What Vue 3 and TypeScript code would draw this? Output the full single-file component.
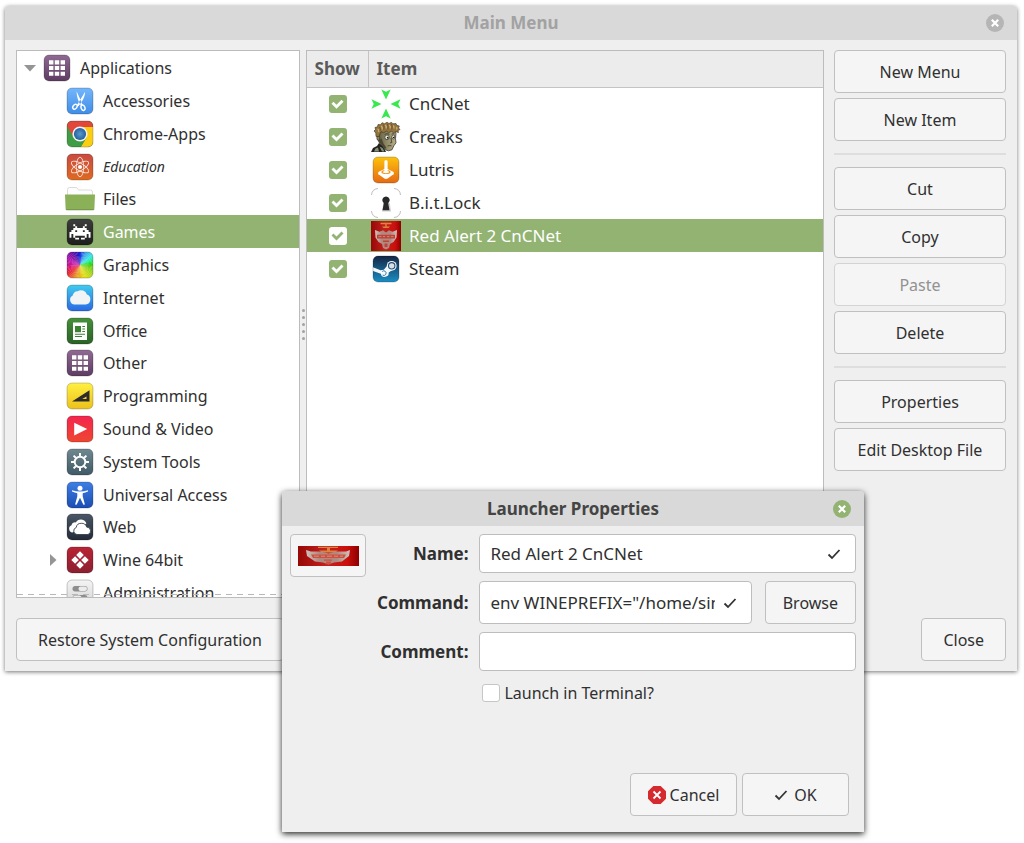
<script setup lang="ts">
import { ref } from 'vue'

interface Category { label: string; icon: string; empty?: boolean; expandable?: boolean }
interface MenuItem { label: string; icon: string; shown: boolean }
interface Action { label: string; disabled?: boolean }

const categories: Category[] = [
  { label: 'Accessories', icon: 'scissors' },
  { label: 'Chrome-Apps', icon: 'chrome' },
  { label: 'Education', icon: 'atom', empty: true },
  { label: 'Files', icon: 'folder' },
  { label: 'Games', icon: 'invader' },
  { label: 'Graphics', icon: 'colors' },
  { label: 'Internet', icon: 'internet' },
  { label: 'Office', icon: 'office' },
  { label: 'Other', icon: 'grid' },
  { label: 'Programming', icon: 'ruler' },
  { label: 'Sound & Video', icon: 'play' },
  { label: 'System Tools', icon: 'gear' },
  { label: 'Universal Access', icon: 'access' },
  { label: 'Web', icon: 'web' },
  { label: 'Wine 64bit', icon: 'wine', expandable: true },
  { label: 'Administration', icon: 'admin' },
]
const selectedCategory = ref('Games')

const items = ref<MenuItem[]>([
  { label: 'CnCNet', icon: 'cncnet', shown: true },
  { label: 'Creaks', icon: 'creaks', shown: true },
  { label: 'Lutris', icon: 'lutris', shown: true },
  { label: 'B.i.t.Lock', icon: 'lock', shown: true },
  { label: 'Red Alert 2 CnCNet', icon: 'redalert', shown: true },
  { label: 'Steam', icon: 'steam', shown: true },
])
const selectedItem = ref('Red Alert 2 CnCNet')

const actionGroups: Action[][] = [
  [{ label: 'New Menu' }, { label: 'New Item' }],
  [{ label: 'Cut' }, { label: 'Copy' }, { label: 'Paste', disabled: true }, { label: 'Delete' }],
  [{ label: 'Properties' }, { label: 'Edit Desktop File' }],
]

const name = ref('Red Alert 2 CnCNet')
const command = ref('env WINEPREFIX="/home/simon/.wine" wine')
const comment = ref('')
const terminal = ref(false)

// Colour wheel stops: clockwise angle from the top, hue, lightness.
const stops = [
  [0, 232, 48], [25, 205, 58], [45, 188, 58], [70, 150, 52], [95, 95, 45], [135, 70, 47],
  [170, 53, 50], [200, 35, 54], [225, 5, 56], [270, -40, 44], [315, -72, 36], [340, -100, 38], [360, -128, 48],
]
function colourAt(angle: number): string {
  const i = Math.max(1, stops.findIndex(([a]) => angle <= a))
  const [a0, h0, l0] = stops[i - 1]
  const [a1, h1, l1] = stops[i]
  const t = (angle - a0) / (a1 - a0)
  return `hsl(${h0 + (h1 - h0) * t}, 80%, ${l0 + (l1 - l0) * t}%)`
}
const wheel = Array.from({ length: 60 }, (_, i) => {
  const a = i * 6
  const pt = (d: number) => {
    const r = (d * Math.PI) / 180
    return `${15 + 22 * Math.sin(r)},${15 - 22 * Math.cos(r)}`
  }
  return { points: `15,15 ${pt(a)} ${pt(a + 7)}`, fill: colourAt(a + 3) }
})
</script>

<template>
  <svg class="defs" aria-hidden="true">
    <defs>
      <linearGradient id="g-purple" x2="0" y2="1"><stop stop-color="#8f6a92" /><stop offset="1" stop-color="#5e3c62" /></linearGradient>
      <linearGradient id="g-blue" x2="0" y2="1"><stop stop-color="#74b6fb" /><stop offset="1" stop-color="#3f8de8" /></linearGradient>
      <linearGradient id="g-atom" x2="0" y2="1"><stop stop-color="#c94a43" /><stop offset="1" stop-color="#dd6a20" /></linearGradient>
      <linearGradient id="g-net" x2="0" y2="1"><stop stop-color="#3fcbee" /><stop offset="1" stop-color="#2a69e4" /></linearGradient>
      <linearGradient id="g-office" x2="0" y2="1"><stop stop-color="#45903a" /><stop offset="1" stop-color="#2b6227" /></linearGradient>
      <linearGradient id="g-yellow" x2="0" y2="1"><stop stop-color="#fff041" /><stop offset="1" stop-color="#ecc11b" /></linearGradient>
      <linearGradient id="g-red" x2="0" y2="1"><stop stop-color="#f4264f" /><stop offset="1" stop-color="#ee4630" /></linearGradient>
      <linearGradient id="g-slate" x2="0" y2="1"><stop stop-color="#708890" /><stop offset="1" stop-color="#3f5a66" /></linearGradient>
      <linearGradient id="g-access" x2="0" y2="1"><stop stop-color="#3e7fe4" /><stop offset="1" stop-color="#1b4db4" /></linearGradient>
      <linearGradient id="g-web" x2="0" y2="1"><stop stop-color="#4a5766" /><stop offset="1" stop-color="#232b38" /></linearGradient>
      <linearGradient id="g-wine" x2="0" y2="1"><stop stop-color="#b92434" /><stop offset="1" stop-color="#8b2030" /></linearGradient>
      <linearGradient id="g-black" x2="0" y2="1"><stop stop-color="#3d3d3d" /><stop offset="1" stop-color="#1d1d1d" /></linearGradient>
      <linearGradient id="g-grey" x2="0" y2="1"><stop stop-color="#f4f4f4" /><stop offset="1" stop-color="#d4d4d4" /></linearGradient>
      <linearGradient id="g-orange" x2="0" y2="1"><stop stop-color="#fdc20c" /><stop offset="1" stop-color="#e66a12" /></linearGradient>
      <linearGradient id="g-steam" x2="0" y2="1"><stop stop-color="#152543" /><stop offset="1" stop-color="#1b8ec4" /></linearGradient>
      <radialGradient id="g-lens"><stop stop-color="#5b9bd0" /><stop offset="1" stop-color="#255f9b" /></radialGradient>
      <linearGradient id="g-crimson"><stop stop-color="#960807" /><stop offset="0.45" stop-color="#c4201b" /><stop offset="0.8" stop-color="#cb100d" /><stop offset="1" stop-color="#8c0000" /></linearGradient>
      <linearGradient id="g-wing"><stop stop-color="#cfc2bd" /><stop offset="0.3" stop-color="#b08a80" /><stop offset="0.7" stop-color="#b08a80" /><stop offset="1" stop-color="#cfc2bd" /></linearGradient>
      <linearGradient id="g-skin"><stop stop-color="#5e5a40" /><stop offset="0.5" stop-color="#8f8a66" /><stop offset="1" stop-color="#b5ae88" /></linearGradient>
      <clipPath id="tile-clip"><rect x="2" y="2" width="26" height="26" rx="5" /></clipPath>
    </defs>

    <symbol id="i-grid" viewBox="0 0 30 30">
      <rect class="tile" x="2" y="2" width="26" height="26" rx="5" fill="url(#g-purple)" />
      <path fill="#fff" d="M7 7.3h4.4v4.1H7zM12.8 7.3h4.4v4.1h-4.4zM18.6 7.3H23v4.1h-4.4zM7 13h4.4v4.1H7zM12.8 13h4.4v4.1h-4.4zM18.6 13H23v4.1h-4.4zM7 18.7h4.4v4.1H7zM12.8 18.7h4.4v4.1h-4.4zM18.6 18.7H23v4.1h-4.4z" />
    </symbol>
    <symbol id="i-scissors" viewBox="0 0 30 30">
      <rect class="tile" x="2" y="2" width="26" height="26" rx="5" fill="url(#g-blue)" />
      <path fill="#fff" d="M11.6 5.2 17.8 19l-1.7.9C13.4 15.7 11.5 10.5 11.6 5.2zM20.1 5.8 11.9 19.2l1.6 1C17.3 16 20 11 20.1 5.8z" />
      <ellipse cx="10" cy="20.7" rx="1.9" ry="2.7" transform="rotate(38 10 20.7)" fill="none" stroke="#fff" stroke-width="1.4" />
      <ellipse cx="18" cy="21.7" rx="1.9" ry="2.8" transform="rotate(-20 18 21.7)" fill="none" stroke="#fff" stroke-width="1.4" />
    </symbol>
    <symbol id="i-chrome" viewBox="0 0 30 30">
      <g clip-path="url(#tile-clip)">
        <path fill="#3f9d45" d="M2 2h26v26H2z" />
        <path fill="#fcce12" d="M15 8h13v20H16l6-10z" />
        <path fill="#e2473c" d="M2 2h26v6H15l-6.5 10L2 7z" />
      </g>
      <circle cx="15" cy="15" r="7.6" fill="#f3f3f3" />
      <circle cx="15" cy="15" r="6.1" fill="url(#g-lens)" />
      <rect class="tile" x="2" y="2" width="26" height="26" rx="5" fill="none" />
    </symbol>
    <symbol id="i-atom" viewBox="0 0 30 30">
      <rect class="tile" x="2" y="2" width="26" height="26" rx="5" fill="url(#g-atom)" />
      <g fill="none" stroke="#fbe3da" stroke-width="0.9">
        <ellipse cx="15" cy="15" rx="3.7" ry="9.8" />
        <ellipse cx="15" cy="15" rx="3.7" ry="9.8" transform="rotate(60 15 15)" />
        <ellipse cx="15" cy="15" rx="3.7" ry="9.8" transform="rotate(120 15 15)" />
      </g>
      <circle cx="15" cy="15" r="2" fill="#fff" />
    </symbol>
    <symbol id="i-folder" viewBox="0 0 30 30">
      <path fill="#fdfdfd" stroke="#d2d2d2" stroke-width="0.8" d="M2.5 12V5.5a2 2 0 0 1 2-2h7l2 2.5h12a2 2 0 0 1 2 2V12z" />
      <path fill="#8ab158" d="M0 10.5h30l-.6 14a1.5 1.5 0 0 1-1.5 1.5H2.1a1.5 1.5 0 0 1-1.5-1.5z" />
      <path fill="#6f9342" d="M.6 25.2h28.8l-.8 1H1.4z" />
    </symbol>
    <symbol id="i-invader" viewBox="0 0 30 30">
      <rect class="tile" x="2" y="2" width="26" height="26" rx="5" fill="url(#g-black)" />
      <path transform="translate(4.5 7.3) scale(1.91)" fill="#fff" d="M2 0h1v1H2zM8 0h1v1H8zM3 1h1v1.05H3zM7 1h1v1.05H7zM2 2h7v1.05H2zM1 3h2v1.05H1zM4 3h3v1.05H4zM8 3h2v1.05H8zM0 4h11v1.05H0zM0 5h1v1.05H0zM2 5h7v1H2zM10 5h1v1.05h-1zM0 6h1v1H0zM2 6h1v1H2zM8 6h1v1H8zM10 6h1v1h-1zM3 7h2v1H3zM6 7h2v1H6z" />
    </symbol>
    <symbol id="i-colors" viewBox="0 0 30 30">
      <g clip-path="url(#tile-clip)">
        <polygon v-for="(w, i) in wheel" :key="i" :points="w.points" :fill="w.fill" />
      </g>
      <rect class="tile" x="2" y="2" width="26" height="26" rx="5" fill="none" />
    </symbol>
    <symbol id="i-internet" viewBox="0 0 30 30">
      <rect class="tile" x="2" y="2" width="26" height="26" rx="5" fill="url(#g-net)" />
      <path fill="#f1f3f5" d="M9.5 21.5a4.7 4.7 0 0 1-1.8-8.9 4.7 4.7 0 0 1 5-4.3 6 6 0 0 1 9.2 3.3 5.1 5.1 0 0 1-1.2 9.9z" />
    </symbol>
    <symbol id="i-office" viewBox="0 0 30 30">
      <rect class="tile" x="2" y="2" width="26" height="26" rx="5" fill="url(#g-office)" />
      <path fill="#fff" d="M8 6.5h14v17.5H8z" />
      <path fill="#3c8132" d="M10 10h6v6.3h-6zM17.3 10H20v1h-2.7zM17.3 12.5H20v1h-2.7zM17.3 15H20v1h-2.7zM10 17.7h10v1H10zM10 20h7v1h-7z" />
    </symbol>
    <symbol id="i-ruler" viewBox="0 0 30 30">
      <rect class="tile" x="2" y="2" width="26" height="26" rx="5" fill="url(#g-yellow)" />
      <path fill="#2d2b2c" fill-rule="evenodd" d="M24.5 9.3v11.2H7zM21.5 15.5v2.5h-4.3z" />
    </symbol>
    <symbol id="i-play" viewBox="0 0 30 30">
      <rect class="tile" x="2" y="2" width="26" height="26" rx="5" fill="url(#g-red)" />
      <path fill="#fff" d="m9.2 8.8 13 6.3-13 6.3z" />
    </symbol>
    <symbol id="i-gear" viewBox="0 0 30 30">
      <rect class="tile" x="2" y="2" width="26" height="26" rx="5" fill="url(#g-slate)" />
      <circle cx="15" cy="15" r="5.3" fill="none" stroke="#fff" stroke-width="1.9" />
      <path stroke="#fff" stroke-width="2" d="M15 6v3M15 21v3M6 15h3M21 15h3M8.6 8.6l2.2 2.2M19.2 19.2l2.2 2.2M8.6 21.4l2.2-2.2M19.2 10.8l2.2-2.2" />
    </symbol>
    <symbol id="i-access" viewBox="0 0 30 30">
      <rect class="tile" x="2" y="2" width="26" height="26" rx="5" fill="url(#g-access)" />
      <circle cx="15" cy="8.3" r="2.5" fill="#fff" />
      <path fill="#fff" d="M7 10.3q8 2.5 16 0v1.3q-2.8 1.2-5.3 1.6v3l2.2 8.2-1.5.4L15 17.8l-3.4 7-1.5-.4 2.2-8.2v-3Q9.8 12.8 7 11.6z" />
    </symbol>
    <symbol id="i-web" viewBox="0 0 30 30">
      <rect class="tile" x="2" y="2" width="26" height="26" rx="5" fill="url(#g-web)" />
      <path fill="#fff" d="M7.5 20.5a3.8 3.8 0 0 1-1-7.3 4 4 0 0 1 4.3-2.8 5.8 5.8 0 0 1 10.6 1l-3 2z" />
      <path fill="#fff" stroke="#36414e" stroke-width="0.9" d="M12 22.5a3.6 3.6 0 0 1-.8-7 5 5 0 0 1 5-4.2 5.4 5.4 0 0 1 5.5 3.8 3.8 3.8 0 0 1 1.3 7.4z" />
    </symbol>
    <symbol id="i-wine" viewBox="0 0 30 30">
      <rect class="tile" x="2" y="2" width="26" height="26" rx="5" fill="url(#g-wine)" />
      <path fill="#fff" d="m15 6.3 3.8 3.8-3.8 3.8-3.8-3.8zM15 16.1l3.8 3.8-3.8 3.8-3.8-3.8zM10.1 11.2l3.8 3.8-3.8 3.8L6.3 15zM19.9 11.2l3.8 3.8-3.8 3.8-3.8-3.8z" />
    </symbol>
    <symbol id="i-admin" viewBox="0 0 30 30">
      <rect class="tile" x="2" y="2" width="26" height="26" rx="5" fill="url(#g-grey)" />
      <rect x="7.5" y="8" width="15" height="5.5" rx="2.7" fill="#8d8d8d" />
      <rect x="13.5" y="8.5" width="8.5" height="4.5" rx="2.2" fill="#ececec" />
      <rect x="7.5" y="17" width="15" height="5.5" rx="2.7" fill="#8d8d8d" />
      <rect x="8" y="17.5" width="8.5" height="4.5" rx="2.2" fill="#ececec" />
    </symbol>

    <symbol id="i-cncnet" viewBox="0 0 30 30">
      <path fill="#3be750" d="m10.3.5 4.7 2.2L19.7.5 15 10.5zM.5 10.3 10.5 15 .5 19.7 2.7 15zM29.5 10.3 19.5 15l10 4.7L27.3 15zM15 19.5l4.7 10-4.7-2.2-4.7 2.2z" />
    </symbol>
    <symbol id="i-creaks" viewBox="0 0 30 30">
      <path fill="#23211a" d="M0 30l2-4 4-2 2-3 4 3 3 6z" />
      <path fill="#85907c" d="m3 29.5 1.5-3 2.5-1 1 4zM8.5 24.5l3 1.5 2 3.5H11z" />
      <path fill="url(#g-skin)" stroke="#2a271c" stroke-width="0.7" d="M7 9.5 6.5 17l2 4 2.5 2.5 2.5 4 4 1.3 3.5-1 1.8-4 2.2-3-.5-4 .5-5.5-2-4z" />
      <path fill="#4b4732" d="m8 18 2.5-1.5 2 5 3 4.5-2 1-2.5-4-2.5-2.5z" />
      <ellipse cx="7.3" cy="16" rx="1.5" ry="2.2" fill="#8f8a60" stroke="#2b281c" stroke-width="0.6" />
      <ellipse cx="16" cy="15.3" rx="2.1" ry="2.3" fill="#f4f4e6" stroke="#2b281c" stroke-width="0.7" />
      <ellipse cx="22.3" cy="15" rx="1.5" ry="2" fill="#f4f4e6" stroke="#2b281c" stroke-width="0.7" />
      <circle cx="16.7" cy="15.7" r="0.9" fill="#15140e" />
      <circle cx="22.6" cy="15.4" r="0.7" fill="#15140e" />
      <path fill="none" stroke="#3a3625" stroke-width="0.8" d="m20 16 .8 4.5-1.8.4M16.5 24q2-.8 4-.2M13.5 12.3q2.5-1.3 5 0M20.5 12.2q1.7-1 3.3-.2" />
      <path fill="#94743f" stroke="#3a2f1b" stroke-width="0.6" d="M5 14.5 4.8 11 3 9l1.5-1.5L4 5.5l2.5-.7L7 2.5l2.5.2 1.5-2 2.5 1L16 .3l2 1.2L20.5.3l1.5 1.5 3-.3.8 1.8 2.5.7-.8 2 1.5 1.5-2 1 .5 2-3-.8-2 1-2-1.5-3 1.5-2-1.5-3 1.5-2.500-1-1 2-1 3z" />
      <path d="M6.5 7q2 1 1 3M10 4q2 1.5 1 3.5M14 3q2 1.5 1 3.5M18 3q2 1.5 1 3.5M22 3.5q1.5 1 .8 3M25.5 5q.8 1 0 2.5" fill="none" stroke="#ccb175" stroke-width="1.2" />
      <path d="M8.5 5q1.500 1.500.5 4M12.5 2.5q1 2 .3 5M16.5 2q1 2 .3 5.5M20.5 2q1 2 .3 5.5" fill="none" stroke="#5b4526" stroke-width="0.7" />
    </symbol>
    <symbol id="i-lutris" viewBox="0 0 30 30">
      <rect class="tile" x="2" y="2" width="26" height="26" rx="5" fill="url(#g-orange)" />
      <path fill="#fff" d="m15 13.3 7.2 3.4q1.5 1 .3 2.5L16.6 23.6q-1.6.9-3.2 0L7.5 19.2q-1.2-1.5.3-2.5z" />
      <ellipse cx="15" cy="17" rx="4.6" ry="2.1" fill="#f0981a" />
      <path fill="#fff" d="M13.4 6.5a1.6 1.6 0 0 1 3.2 0V16q1.6.3 1.6 1c0 .7-1.4 1.2-3.2 1.2s-3.2-.5-3.2-1.2q0-.7 1.6-1z" />
    </symbol>
    <symbol id="i-lock" viewBox="0 0 30 30">
      <rect x="0.5" y="0.5" width="29" height="29" rx="8" fill="#fff" />
      <path fill="none" stroke="#b5b5b5" stroke-width="0.9" d="M.5 7Q1 1 7 .5M23 .5q6 .5 6.5 6.5M29.5 23q-.5 6-6.5 6.5M7 29.5Q1 29 .5 23" />
      <path fill="#cfcfcf" d="M11 23.5 12.3 15h6.4l1.3 8.5z" />
      <path fill="#272727" d="M15 8.5a3.7 3.7 0 0 1 2.2 6.7l1.3 7h-7l1.3-7A3.7 3.7 0 0 1 15 8.5z" />
    </symbol>
    <symbol id="i-redalert" viewBox="0 0 30 30">
      <rect width="30" height="30" fill="url(#g-crimson)" />
      <path fill="#d9853f" d="M9.5 1.8h11v1.4h-11zM14.3 3.2h1.4v3h-1.4zM11 5.5h8l-1.5 1.5h-5z" />
      <path fill="url(#g-wing)" d="m4 9 4.5 1.8 3.5-1.6 3 2.3 3-2.3 3.5 1.6L26 9l-.5 7.5-3 4.5-3.5 2-1 4-3 1.5-3-1.5-1-4-3.500-2-3-4.500z" />
      <path fill="#c0433a" d="M6 13.8h18v3.7H6zM12 19.5h6V21h-6zM13.5 22.5h3V26h-3z" />
      <path stroke="#d98f80" stroke-width="0.8" d="M7.5 15.6h3M12 15.6h2M16 15.6h2.5M20 15.6h2.5" />
    </symbol>
    <symbol id="i-steam" viewBox="0 0 30 30">
      <g clip-path="url(#tile-clip)">
        <rect x="2" y="2" width="26" height="26" fill="url(#g-steam)" />
        <path fill="#f5f8fa" d="M2 13.3 9.5 16.2l3.3-.4 3.8-4.5 7.8 2.7-6.7 4.5a4 4 0 0 1-7.9 1.2L2 17z" />
        <circle cx="20.7" cy="11.8" r="4.9" fill="#f5f8fa" />
        <circle cx="20.7" cy="11.8" r="3.2" fill="#d9e1e8" stroke="#28517a" stroke-width="1.1" />
        <path fill="none" stroke="#24709f" stroke-width="0.9" d="M11.2 17.5a2.3 2.3 0 1 1 .4 3.6" />
      </g>
      <rect class="tile" x="2" y="2" width="26" height="26" rx="5" fill="none" />
    </symbol>
    <symbol id="i-close" viewBox="0 0 18 18">
      <circle cx="9" cy="9" r="9" fill="currentColor" />
      <path d="m5.8 5.8 6.4 6.4m0-6.4-6.4 6.4" stroke="#fff" stroke-width="2.2" />
    </symbol>
    <symbol id="i-tick" viewBox="0 0 14 14">
      <path d="m1.5 7.5 3.5 3.5L12.5 3" fill="none" stroke="#333" stroke-width="1.8" />
    </symbol>
  </svg>

  <main class="desktop">
    <section class="window" aria-label="Main Menu">
      <header class="titlebar inactive">
        <h1>Main Menu</h1>
        <button class="close" aria-label="Close window"><svg><use href="#i-close" /></svg></button>
      </header>

      <div class="panes">
        <nav class="tree" aria-label="Menus">
          <button class="node root">
            <svg class="arrow" viewBox="0 0 12 12"><path d="M0 3h12L6 9.5z" /></svg>
            <svg class="icon"><use href="#i-grid" /></svg>
            <span>Applications</span>
          </button>
          <button
            v-for="c in categories"
            :key="c.label"
            class="node"
            :class="{ selected: c.label === selectedCategory, empty: c.empty }"
            @click="selectedCategory = c.label"
          >
            <svg class="arrow" viewBox="0 0 12 12"><path v-if="c.expandable" d="M3 0v12l6.5-6z" /></svg>
            <svg class="icon"><use :href="'#i-' + c.icon" /></svg>
            <span>{{ c.label }}</span>
          </button>
        </nav>

        <div class="splitter"><i v-for="n in 5" :key="n"></i></div>

        <div class="list">
          <table>
            <thead>
              <tr><th class="show">Show</th><th>Item</th></tr>
            </thead>
            <tbody>
              <tr v-for="it in items" :key="it.label" :class="{ selected: it.label === selectedItem }" @click="selectedItem = it.label">
                <td class="show"><input v-model="it.shown" type="checkbox" class="check" :aria-label="'Show ' + it.label" /></td>
                <td>
                  <div class="entry"><svg class="icon"><use :href="'#i-' + it.icon" /></svg>{{ it.label }}</div>
                </td>
              </tr>
            </tbody>
          </table>
        </div>

        <div class="actions">
          <template v-for="(group, gi) in actionGroups" :key="gi">
            <hr v-if="gi > 0" />
            <button v-for="a in group" :key="a.label" class="btn" :disabled="a.disabled">{{ a.label }}</button>
          </template>
        </div>
      </div>

      <footer class="bottom">
        <button class="btn">Restore System Configuration</button>
        <button class="btn">Close</button>
      </footer>
    </section>

    <section class="dialog" role="dialog" aria-label="Launcher Properties">
      <header class="titlebar">
        <h2>Launcher Properties</h2>
        <button class="close" aria-label="Close dialog"><svg><use href="#i-close" /></svg></button>
      </header>
      <form class="form" @submit.prevent>
        <button type="button" class="btn picture" aria-label="Choose icon">
          <svg viewBox="0 0 61 20">
            <rect width="61" height="20" fill="url(#g-crimson)" />
            <path fill="#d9853f" d="M20 .8h20V2H20zM29 2h3v3h-3zM21 4.5h19L37 6.5H24z" />
            <path fill="url(#g-wing)" d="m8 4 5 1.5h10l7.5 2 7.5-2h10L52 4l-1 6-7 5.5-8 1-5.5 2-5.5-2-8-1L9 10z" />
            <path fill="#cb5243" d="M13 8.5h35l-2 3.5H15zM26 13.5h8v1.3h-8zM28 15.5h5v2.7h-5z" />
            <path stroke="#e09c88" stroke-width="0.8" d="M16 10.2h5M23 10.2h4M29 10.2h5M36 10.2h4M42 10.2h3" />
          </svg>
        </button>
        <label class="name" for="f-name">Name:</label>
        <div class="field">
          <input id="f-name" v-model="name" type="text" />
          <svg class="tick"><use href="#i-tick" /></svg>
        </div>
        <label class="name" for="f-command">Command:</label>
        <div class="split">
          <div class="field tall">
            <input id="f-command" v-model="command" type="text" />
            <svg class="tick"><use href="#i-tick" /></svg>
          </div>
          <button type="button" class="btn">Browse</button>
        </div>
        <label class="name" for="f-comment">Comment:</label>
        <div class="field"><input id="f-comment" v-model="comment" type="text" /></div>
        <label class="terminal"><input v-model="terminal" type="checkbox" class="check" />Launch in Terminal?</label>
      </form>
      <footer class="dialog-actions">
        <button class="btn">
          <svg class="stop" viewBox="0 0 18 18">
            <path fill="#d52b2e" d="M5.3 0h7.4L18 5.3v7.4L12.7 18H5.3L0 12.7V5.3z" />
            <path d="m5.5 5.5 7 7m0-7-7 7" stroke="#fff" stroke-width="1.8" />
          </svg>
          Cancel
        </button>
        <button class="btn ok"><svg class="tick"><use href="#i-tick" /></svg>OK</button>
      </footer>
    </section>
  </main>
</template>

<style>
body {
  background: #fff;
}
</style>

<style scoped>
* {
  box-sizing: border-box;
}
.defs {
  position: absolute;
  width: 0;
  height: 0;
}
.tile {
  stroke: #0000004d;
  stroke-width: 0.7;
}
.desktop {
  position: relative;
  min-height: 100vh;
  padding: 6px 7px 0 5px;
  overflow: hidden;
  font: 16px/22px "Noto Sans", "Open Sans", sans-serif;
  color: #303030;
}
button,
input {
  font: inherit;
  color: inherit;
}
.window {
  display: flex;
  flex-direction: column;
  height: calc(100vh - 178px);
  background: #efefef;
  border-radius: 4px 4px 0 0;
  box-shadow: 0 1px 4px rgba(0, 0, 0, 0.55);
}
.titlebar {
  display: grid;
  grid-template-columns: 18px 1fr 18px;
  align-items: center;
  height: 34px;
  padding: 0 13px;
  flex: none;
  background: #d9d9d9;
  border-radius: 4px 4px 0 0;
  color: #444;
}
.titlebar h1,
.titlebar h2 {
  grid-column: 2;
  margin: 0;
  font-size: 17px;
  font-weight: 700;
  text-align: center;
}
.titlebar.inactive {
  color: #a2a2a2;
}
.close {
  width: 18px;
  height: 18px;
  padding: 0;
  border: 0;
  background: none;
  color: #92b372;
}
.inactive .close {
  color: #b5b5b5;
}
.close svg {
  display: block;
  width: 18px;
  height: 18px;
}
.panes {
  display: flex;
  flex: 1;
  min-height: 0;
  padding: 10px 11px 0;
}
.tree {
  position: relative;
  display: grid;
  grid-auto-rows: 33px 33px 33px 33px 32px;
  align-content: start;
  width: 284px;
  flex: none;
  overflow: hidden;
  background: #fff;
  border: 1px solid #bcbcbc;
}
.tree::after {
  content: "";
  position: absolute;
  left: 0;
  right: 0;
  bottom: 2px;
  height: 1px;
  background: repeating-linear-gradient(90deg, #b8b8b8 0 6px, transparent 6px 11px);
}
.node {
  display: flex;
  align-items: center;
  padding: 0 0 0 30px;
  border: 0;
  background: none;
  text-align: left;
}
.node.root {
  padding-left: 7px;
}
.node.selected {
  background: #92b372;
  color: #fff;
}
.node.empty {
  font-size: 14px;
  font-style: italic;
}
.arrow {
  width: 12px;
  height: 12px;
  margin-right: 6px;
  fill: #959595;
}
.icon {
  width: 30px;
  height: 30px;
  margin-right: 8px;
  flex: none;
}
.splitter {
  display: flex;
  flex-direction: column;
  align-items: center;
  justify-content: center;
  gap: 4px;
  width: 6px;
}
.splitter i {
  width: 3px;
  height: 3px;
  border-radius: 50%;
  background: #a2a2a2;
}
.list {
  flex: 1;
  background: #fff;
  border: 1px solid #bcbcbc;
  font-size: 17px;
}
table {
  width: 100%;
  border-collapse: collapse;
  table-layout: fixed;
}
th {
  height: 36px;
  padding: 0 8px;
  background: #ececec;
  border-bottom: 1px solid #c4c4c4;
  color: #5a5a5a;
  text-align: left;
}
th.show {
  width: 61px;
  padding: 0;
  border-right: 1px solid #c4c4c4;
}
.show {
  text-align: center;
}
td {
  height: 33px;
  padding: 0 0 0 3px;
}
td.show {
  padding: 0;
}
tr.selected {
  background: #92b372;
  color: #fff;
}
.entry {
  display: flex;
  align-items: center;
}
.check {
  appearance: none;
  display: block;
  width: 18px;
  height: 18px;
  margin: 0 auto;
  border: 1px solid #c6c6c6;
  border-radius: 3px;
  background: #fff;
}
.check:checked {
  border: 0;
  background: #92b372;
}
.check:checked::after {
  content: "";
  display: block;
  width: 18px;
  height: 18px;
  background: #fff;
  clip-path: polygon(3px 9px, 5px 7px, 8px 10px, 13px 5px, 15px 7px, 8px 14px);
}
.selected .check:checked {
  background: #fff;
}
.selected .check:checked::after {
  background: #92b372;
}
.actions {
  display: flex;
  flex-direction: column;
  gap: 5px;
  width: 172px;
  margin-left: 10px;
}
.actions hr {
  width: 100%;
  height: 2px;
  margin: 7px 0;
  border: 0;
  background: #dedede;
}
.btn {
  display: flex;
  align-items: center;
  justify-content: center;
  height: 43px;
  padding: 0 21px;
  flex: none;
  background: #f5f5f5;
  border: 1px solid #c0c0c0;
  border-radius: 4px;
  white-space: nowrap;
}
.actions .btn {
  padding: 0 8px;
}
.btn:disabled {
  color: #929292;
  border-color: #d3d3d3;
}
.bottom {
  display: flex;
  justify-content: space-between;
  padding: 20px 11px 10px;
}
.dialog {
  position: absolute;
  left: 282px;
  top: 491px;
  width: 582px;
  max-width: calc(100% - 282px);
  background: #efefef;
  border-radius: 4px 4px 0 0;
  box-shadow: 0 2px 6px rgba(0, 0, 0, 0.85);
}
.dialog .titlebar {
  height: 35px;
}
.form {
  display: grid;
  grid-template-columns: 76px auto minmax(0, 1fr);
  align-items: center;
  gap: 8px 11px;
  padding: 8px 8px 0;
}
.picture {
  grid-row: 1 / 3;
  align-self: start;
  padding: 0;
}
.picture svg {
  width: 61px;
  height: 20px;
}
.name {
  grid-column: 2;
  font-size: 17px;
  font-weight: 700;
  text-align: right;
}
.field {
  display: flex;
  align-items: center;
  gap: 8px;
  flex: 1;
  min-width: 0;
  height: 39px;
  padding: 0 14px 0 10px;
  background: #fff;
  border: 1px solid #bdbdbd;
  border-radius: 4px;
}
.field.tall {
  height: 43px;
}
.field input {
  flex: 1;
  min-width: 0;
  padding: 0;
  border: 0;
  outline: 0;
  background: none;
  font-size: 17px;
}
.tick {
  width: 14px;
  height: 14px;
  flex: none;
}
.split {
  display: flex;
  gap: 13px;
}
.split .btn {
  padding: 0 17px;
}
.terminal {
  grid-column: 3;
  display: flex;
  align-items: center;
  gap: 4px;
  padding: 3px;
}
.terminal .check {
  margin: 0;
}
.dialog-actions {
  display: flex;
  justify-content: flex-end;
  gap: 5px;
  padding: 66px 15px 16px;
}
.dialog-actions .btn {
  width: 107px;
  padding: 0;
  gap: 4px;
}
.dialog-actions .ok {
  gap: 6px;
}
.stop {
  width: 18px;
  height: 18px;
}
</style>
